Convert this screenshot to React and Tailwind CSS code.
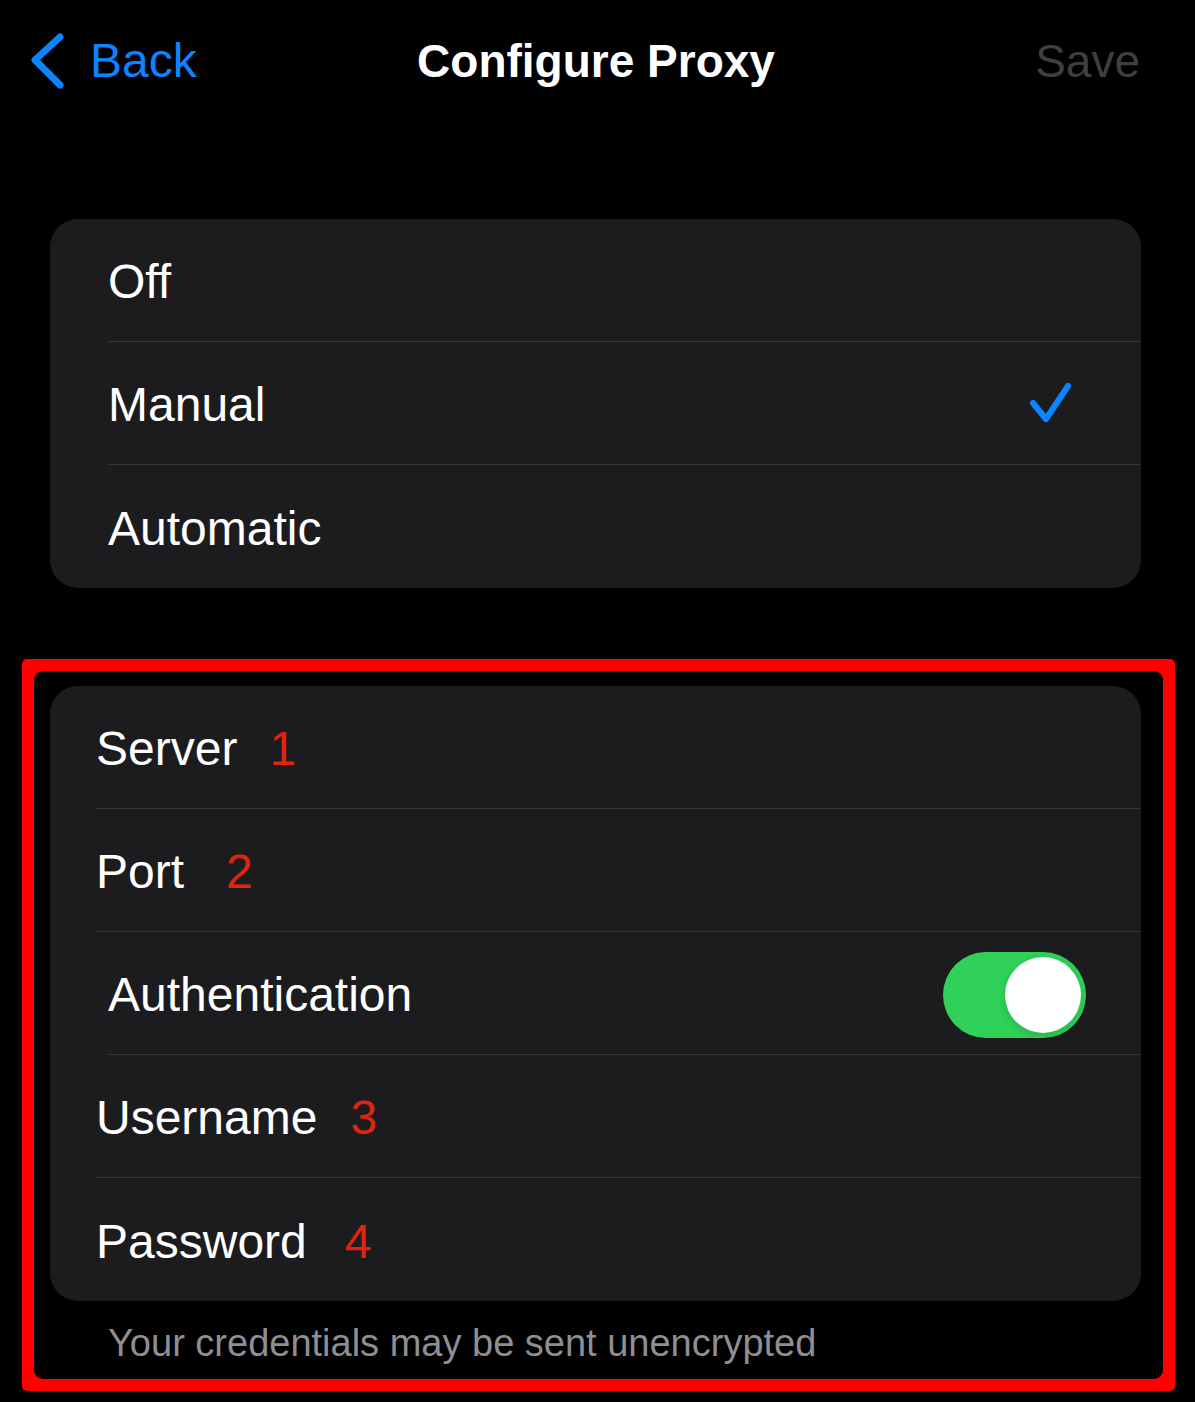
import React from "react";

const font = { fontFamily: '"Liberation Sans", Arial, sans-serif' };

// one settings row; the bottom hairline starts at the row's own text indent
const Row = ({ indent, last, children }) => (
  <div className={indent}>
    <div
      className={`h-[123px] flex items-center ${
        last ? "" : "border-b border-[#38383a]"
      }`}
    >
      {children}
    </div>
  </div>
);

const Label = ({ text, num, gap }) => (
  <div className="mt-[4px] flex items-baseline text-[48px] text-white leading-none">
    <span>{text}</span>
    {num && <span className={`${gap} text-[#e0240f]`}>{num}</span>}
  </div>
);

const Check = () => (
  <svg width="48" height="48" viewBox="0 0 48 48" className="mr-[64px] mt-[4px]">
    <polyline
      points="4,22 17,38 39,5"
      fill="none"
      stroke="#0a84ff"
      strokeWidth="6"
      strokeLinecap="round"
      strokeLinejoin="round"
    />
  </svg>
);

const Toggle = () => (
  <div className="mr-[55px] mt-[4px] w-[143px] h-[86px] rounded-full bg-[#30d158] flex items-center justify-end pr-[5px]">
    <div className="w-[76px] h-[76px] rounded-full bg-white shadow-[0_3px_8px_rgba(0,0,0,0.15)]" />
  </div>
);

export default function App() {
  return (
    <div className="w-[1195px] h-[1402px] bg-black overflow-hidden" style={font}>
      {/* nav bar */}
      <div className="h-[122px] grid grid-cols-[1fr_auto_1fr] items-center pl-[30px] pr-[33px]">
        <div className="flex items-center">
          <svg width="36" height="56" viewBox="0 0 36 56">
            <polyline
              points="30,4 5,27 30,52"
              fill="none"
              stroke="#0a84ff"
              strokeWidth="7"
              strokeLinecap="round"
              strokeLinejoin="round"
            />
          </svg>
          <span className="ml-[24px] text-[48px] leading-none text-[#0a84ff]">Back</span>
        </div>
        <div className="text-[46px] font-bold leading-none text-white">Configure Proxy</div>
        <div className="flex justify-end pr-[22px]">
          <span className="text-[46px] leading-none text-[#3f3f41]">Save</span>
        </div>
      </div>

      {/* proxy mode */}
      <div className="mt-[97px] ml-[50px] w-[1091px] rounded-[28px] bg-[#1c1c1e] overflow-hidden">
        <Row indent="pl-[58px]">
          <Label text="Off" />
        </Row>
        <Row indent="pl-[58px]">
          <div className="flex-1">
            <Label text="Manual" />
          </div>
          <Check />
        </Row>
        <Row indent="pl-[58px]" last>
          <Label text="Automatic" />
        </Row>
      </div>

      {/* manual settings, boxed */}
      <div className="mt-[71px] ml-[22px] w-[1153px] rounded-[5px] bg-[#ff0000] p-[12px]">
        <div className="rounded-[9px] bg-black pt-[15px] pl-[16px]">
          <div className="w-[1091px] rounded-[28px] bg-[#1c1c1e] overflow-hidden">
            <Row indent="pl-[46px]">
              <Label text="Server" num="1" gap="ml-[32px]" />
            </Row>
            <Row indent="pl-[46px]">
              <Label text="Port" num="2" gap="ml-[42px]" />
            </Row>
            <Row indent="pl-[58px]">
              <div className="flex-1">
                <Label text="Authentication" />
              </div>
              <Toggle />
            </Row>
            <Row indent="pl-[46px]">
              <Label text="Username" num="3" gap="ml-[33px]" />
            </Row>
            <Row indent="pl-[46px]" last>
              <Label text="Password" num="4" gap="ml-[38px]" />
            </Row>
          </div>
          <div className="h-[78px] flex items-center pt-[6px] pl-[58px] text-[38px] leading-none text-[#8e8e93]">
            Your credentials may be sent unencrypted
          </div>
        </div>
      </div>
    </div>
  );
}
